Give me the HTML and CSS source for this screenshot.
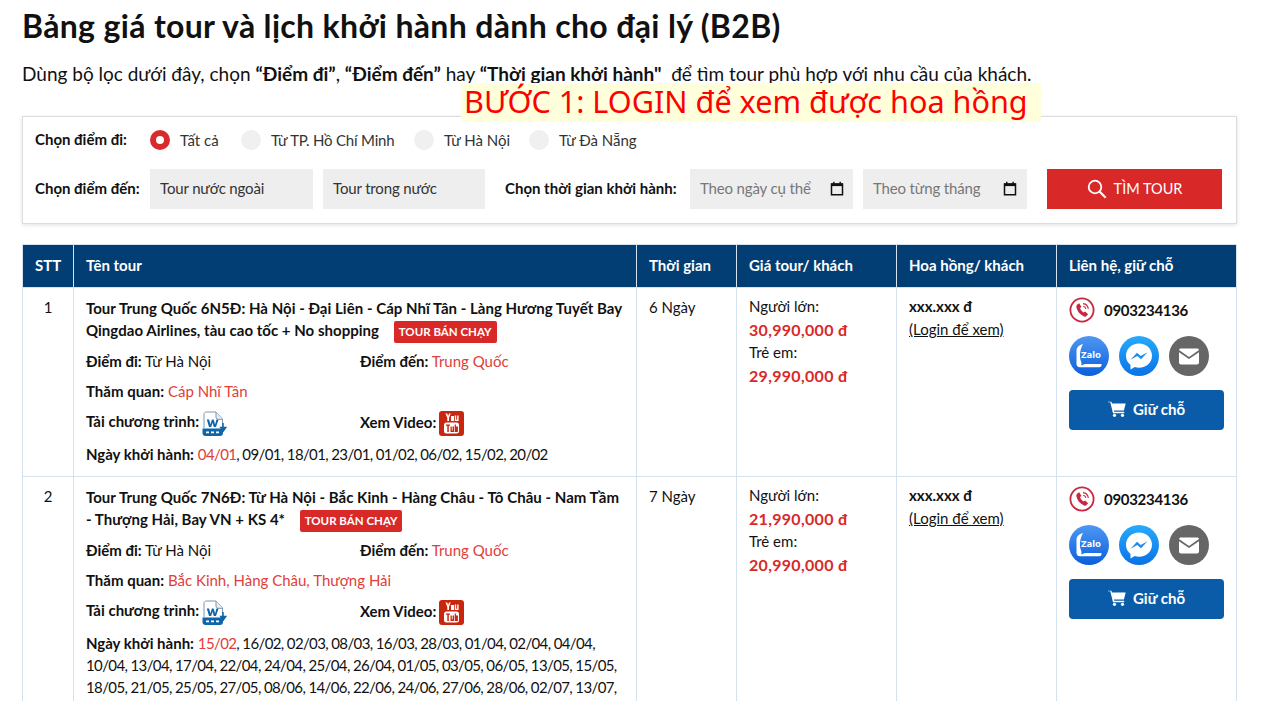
FILE: index.html
```html
<!DOCTYPE html>
<html lang="vi">
<head>
<meta charset="utf-8">
<title>Bảng giá tour</title>
<link rel="stylesheet" href="styles.css">
</head>
<body>
<svg class="defs" width="0" height="0" aria-hidden="true">
  <defs>
    <linearGradient id="gz" x1="0" y1="0" x2="0" y2="1"><stop offset="0" stop-color="#4f97f3"/><stop offset="1" stop-color="#0a5fdc"/></linearGradient>
    <linearGradient id="gm" x1="0" y1="0" x2="0" y2="1"><stop offset="0" stop-color="#27aafc"/><stop offset="1" stop-color="#0a72e6"/></linearGradient>
    <symbol id="i-phone" viewBox="0 0 26 26">
      <circle cx="13" cy="13" r="11.6" fill="#fff" stroke="#c8283f" stroke-width="1.8"/>
      <path d="M8.2 7.4l2-1.2 2.3 3.7-1.5 1.2c.6 1.8 1.8 3.4 3.6 4.5l1.5-1.2 3 2.8-1.6 1.9c-.6.6-1.5.7-2.4.3-4.2-1.7-6.9-5-7.8-9.3-.1-1 .2-2 .9-2.7z" fill="#c8283f"/>
      <path d="M14 6.600c2.800.3 5 2.500 5.300 5.400M14.200 9.200c1.500.2 2.500 1.300 2.700 2.700" fill="none" stroke="#c8283f" stroke-width="1.100"/>
    </symbol>
    <symbol id="i-zalo" viewBox="0 0 40 40">
      <circle cx="20" cy="20" r="20" fill="url(#gz)"/>
      <path d="M14 8c-4 1-6.500 3.500-6.500 7v13c0 2 1.300 3.200 3.500 3.200H30c1.600 0 2.500-.7 2.500-2.200V28H16l-4 1.600c.9-1.400.7-2.400 0-4.300-1.800-4.800-1.200-11.300 2-17.300z" fill="#fff"/>
      <text x="22" y="21.500" class="zalo-text">Zalo</text>
    </symbol>
    <symbol id="i-mess" viewBox="0 0 40 40">
      <circle cx="20" cy="20" r="20" fill="url(#gm)"/>
      <path d="M20 7.500c-7.300 0-13 5.300-13 12.200 0 3.800 1.700 7 4.500 9.200v4.600l4.300-2.400c1.300.4 2.700.6 4.200.6 7.300 0 13-5.300 13-12 0-6.900-5.700-12.200-13-12.200z" fill="#fff"/>
      <path d="M11.500 23.700l6.500-7 3.700 3.300 6.800-3.700-6.500 7-3.700-3.300z" fill="#1a8cf0"/>
    </symbol>
    <symbol id="i-mail" viewBox="0 0 40 40">
      <circle cx="20" cy="20" r="20" fill="#666"/>
      <path d="M12 12.500h16c1.100 0 2 .7 2 1.600L20 21 10 14.100c0-.9.900-1.600 2-1.600z" fill="#fff"/>
      <path d="M10 16.200l10 6.800 10-6.800v10.300c0 1.100-.9 2-2 2H12c-1.100 0-2-.9-2-2z" fill="#fff"/>
    </symbol>
    <symbol id="i-cart" viewBox="0 0 18 16">
      <path d="M0 .8h3.400l.6 1.800h13.700l-1.800 7H5.900l.3 1.200h10v1.500H5l-2.700-11H0z" fill="#fff"/>
      <circle cx="6.500" cy="14.300" r="1.600" fill="#fff"/><circle cx="14.500" cy="14.300" r="1.600" fill="#fff"/>
    </symbol>
    <symbol id="i-cal" viewBox="0 0 14 15">
      <path d="M1.500 3h11v10.700h-11z" fill="#eee" stroke="#111" stroke-width="1.500"/>
      <path d="M1 2.500h12v2.600H1z" fill="#111"/>
      <path d="M3.800 .8v2.400M10.200 .8v2.400" stroke="#111" stroke-width="1.400"/>
    </symbol>
    <symbol id="i-search" viewBox="0 0 20 20">
      <circle cx="8" cy="8" r="6.300" fill="none" stroke="#fff" stroke-width="1.800"/>
      <path d="M12.700 12.700l6 6" stroke="#fff" stroke-width="2.200"/>
    </symbol>
    <symbol id="i-doc" viewBox="0 0 25 26">
      <path d="M2 17V3.500C2 2 3 1 4.500 1h9.500l6.500 7v9" fill="#fff" stroke="#7d97ad" stroke-width="1"/>
      <path d="M14 1v5c0 1.500 1 2.300 2.500 2.300h4" fill="#e6edf3" stroke="#7d97ad" stroke-width="1"/>
      <path d="M4.800 8.500h2.300l1.300 5 1.500-5h1.700l1.500 5 1.300-5h2.200L14 16h-2.200l-1.300-4.300L9.200 16H7z" fill="#0e65a8"/>
      <path d="M.5 17.500h20.500v4.500c0 1.800-1.200 3-3 3H3.500c-1.800 0-3-1.200-3-3z" fill="#0e65a8"/>
      <path d="M4 21.300h3M9 21.300h3M14 21.300h3" stroke="#fff" stroke-width="1.800"/>
      <path d="M21 12v5M18.800 16.500h5l-2.500 3.500z" stroke="#0e65a8" stroke-width="1.500" fill="#0e65a8"/>
    </symbol>
    <symbol id="i-yt" viewBox="0 0 25 25">
      <rect width="25" height="25" rx="3" fill="#c9260f"/>
      <rect x="5" y="11.500" width="15" height="11" rx="2.500" fill="#fff"/>
      <path d="M6.500 2.500h1.700l.9 2.500 1-2.500h1.600L10 7v3H8.300V7zM12 5h3v5h-3zM15.800 4.500h1.400v4.200h1V4.500h1.400V10h-3.800z" fill="#fff"/>
      <path d="M7 13.500h4v1.200H9.800V21H8.300v-6.300H7zM11.500 15.500h1.300v4h.8v-4H15V21h-3.500zM15.700 13.500h1.200V15.500h2v5.500h-3.200z" fill="#c9260f"/>
    </symbol>
  </defs>
</svg>

<main class="page">
  <h1 class="title">Bảng giá tour và lịch khởi hành dành cho đại lý (B2B)</h1>
  <p class="intro">Dùng bộ lọc dưới đây, chọn <b>“Điểm đi”</b>, <b>“Điểm đến”</b> hay <b>“Thời gian khởi hành"</b>&nbsp; để tìm tour phù hợp với nhu cầu của khách.</p>
  <div class="notice">BƯỚC 1: LOGIN để xem được hoa hồng</div>

  <section class="filter">
    <div class="filter-row">
      <span class="flabel">Chọn điểm đi:</span>
      <label class="radio radio-on"><i class="dot"></i>Tất cả</label>
      <label class="radio"><i class="dot"></i><span class="tight">Từ TP. Hồ Chí Minh</span></label>
      <label class="radio"><i class="dot"></i>Từ Hà Nội</label>
      <label class="radio"><i class="dot"></i>Từ Đà Nẵng</label>
    </div>
    <div class="filter-row2">
      <span class="flabel flabel-to">Chọn điểm đến:</span>
      <div class="field f-out">Tour nước ngoài</div>
      <div class="field f-in">Tour trong nước</div>
      <span class="flabel flabel-time">Chọn thời gian khởi hành:</span>
      <div class="field f-date ph">Theo ngày cụ thể<svg class="cal"><use href="#i-cal"/></svg></div>
      <div class="field f-month ph">Theo từng tháng<svg class="cal"><use href="#i-cal"/></svg></div>
      <button class="search" type="button"><svg class="search-i"><use href="#i-search"/></svg>TÌM TOUR</button>
    </div>
  </section>

  <table class="tours">
    <colgroup>
      <col class="c1"><col class="c2"><col class="c3"><col class="c4"><col class="c5"><col class="c6">
    </colgroup>
    <thead>
      <tr><th class="center">STT</th><th>Tên tour</th><th>Thời gian</th><th>Giá tour/ khách</th><th>Hoa hồng/ khách</th><th>Liên hệ, giữ chỗ</th></tr>
    </thead>
    <tbody>
      <tr>
        <td class="center up1">1</td>
        <td>
          <div class="tname">Tour Trung Quốc 6N5Đ: Hà Nội - Đại Liên - Cáp Nhĩ Tân - Làng Hương Tuyết Bay Qingdao Airlines, tàu cao tốc + No shopping <span class="badge">TOUR BÁN CHẠY</span></div>
          <div class="meta"><span><b>Điểm đi:</b> Từ Hà Nội</span><span><b>Điểm đến:</b> <em>Trung Quốc</em></span></div>
          <div class="line"><b>Thăm quan:</b> <em>Cáp Nhĩ Tân</em></div>
          <div class="meta meta-i"><span><b>Tải chương trình:</b> <svg class="doc"><use href="#i-doc"/></svg></span><span><b>Xem Video:</b> <svg class="yt"><use href="#i-yt"/></svg></span></div>
          <div class="dates"><b>Ngày khởi hành:</b> <span class="nums"><em>04/01</em>, 09/01, 18/01, 23/01, 01/02, 06/02, 15/02, 20/02</span></div>
        </td>
        <td class="up1">6 Ngày</td>
        <td class="price">Người lớn:<strong>30,990,000 đ</strong>Trẻ em:<strong>29,990,000 đ</strong></td>
        <td class="comm"><b>xxx.xxx đ</b><a href="#">(Login để xem)</a></td>
        <td class="contact">
          <div class="phone"><svg class="phone-i"><use href="#i-phone"/></svg><b>0903234136</b></div>
          <div class="socials"><svg><use href="#i-zalo"/></svg><svg><use href="#i-mess"/></svg><svg><use href="#i-mail"/></svg></div>
          <button class="hold" type="button"><svg class="cart"><use href="#i-cart"/></svg>Giữ chỗ</button>
        </td>
      </tr>
      <tr class="row-long">
        <td class="center up1">2</td>
        <td>
          <div class="tname">Tour Trung Quốc 7N6Đ: Từ Hà Nội - Bắc Kinh - Hàng Châu - Tô Châu - Nam Tầm - Thượng Hải, Bay VN + KS 4* <span class="badge">TOUR BÁN CHẠY</span></div>
          <div class="meta"><span><b>Điểm đi:</b> Từ Hà Nội</span><span><b>Điểm đến:</b> <em>Trung Quốc</em></span></div>
          <div class="line"><b>Thăm quan:</b> <em>Bắc Kinh, Hàng Châu, Thượng Hải</em></div>
          <div class="meta meta-i"><span><b>Tải chương trình:</b> <svg class="doc"><use href="#i-doc"/></svg></span><span><b>Xem Video:</b> <svg class="yt"><use href="#i-yt"/></svg></span></div>
          <div class="dates"><b>Ngày khởi hành:</b> <span class="nums"><em>15/02</em>, 16/02, 02/03, 08/03, 16/03, 28/03, 01/04, 02/04, 04/04, 10/04, 13/04, 17/04, 22/04, 24/04, 25/04, 26/04, 01/05, 03/05, 06/05, 13/05, 15/05, 18/05, 21/05, 25/05, 27/05, 08/06, 14/06, 22/06, 24/06, 27/06, 28/06, 02/07, 13/07,</span></div>
        </td>
        <td class="up1">7 Ngày</td>
        <td class="price">Người lớn:<strong>21,990,000 đ</strong>Trẻ em:<strong>20,990,000 đ</strong></td>
        <td class="comm"><b>xxx.xxx đ</b><a href="#">(Login để xem)</a></td>
        <td class="contact">
          <div class="phone"><svg class="phone-i"><use href="#i-phone"/></svg><b>0903234136</b></div>
          <div class="socials"><svg><use href="#i-zalo"/></svg><svg><use href="#i-mess"/></svg><svg><use href="#i-mail"/></svg></div>
          <button class="hold" type="button"><svg class="cart"><use href="#i-cart"/></svg>Giữ chỗ</button>
        </td>
      </tr>
    </tbody>
  </table>
</main>
</body>
</html>
```
FILE: styles.css
```css
* { box-sizing: border-box; }
html, body { margin: 0; height: 701px; overflow: hidden; }
body { font-family: Lato, "Noto Sans", sans-serif; font-size: 15px; color: #111; background: #fff; }
.defs { position: absolute; }
.zalo-text { font: 700 9.5px "Noto Sans", sans-serif; fill: #fff; text-anchor: middle; }
.page { position: relative; width: 1215px; margin-left: 22px; }
.title { margin: 0; padding-top: 7px; height: 46px; font-size: 32px; line-height: 37px; letter-spacing: .34px; font-weight: 700; }
.intro { margin: 0; padding-top: 16px; height: 70px; font-size: 19px; line-height: 24px; white-space: nowrap; }
.notice { position: absolute; left: 439px; top: 83px; width: 580px; height: 39px; padding-left: 3px; background: #ffffdc; color: #f00; font: 30.6px/37px "Noto Sans", sans-serif; white-space: nowrap; }
.filter { height: 108px; border: 1px solid #ddd; box-shadow: 0 1px 4px rgba(0,0,0,.12); padding: 12px 12px 0; }
.filter-row { display: grid; grid-template-columns: 115px 91px 173px 115px 108px; align-items: center; height: 22px; white-space: nowrap; }
.filter-row2 { display: flex; align-items: center; height: 40px; margin-top: 18px; }
.flabel { flex: none; font-weight: 700; font-size: 15px; white-space: nowrap; padding-bottom: 2px; }
.flabel-to { width: 115px; }
.flabel-time { width: 185px; margin-left: 20px; }
.radio { display: flex; align-items: center; color: #333; }
.tight { letter-spacing: -.2px; }
.dot { flex: none; width: 20px; height: 20px; margin-right: 10px; border-radius: 50%; background: #f0f0f0; }
.radio-on .dot { background: #fff; border: 6px solid #d92b2b; }
.field { flex: none; display: flex; align-items: center; justify-content: space-between; height: 40px; padding: 0 14px 2px 10px; background: #eee; color: #333; white-space: nowrap; letter-spacing: -.15px; }
.f-out { width: 163px; margin-right: 10px; }
.f-in { width: 162px; }
.f-date { width: 163px; margin-right: 10px; padding-right: 8px; }
.f-month { width: 164px; margin-right: 20px; padding-right: 10px; }
.ph { color: #777; }
.cal { width: 14px; height: 15px; }
.f-date .cal { margin-right: 1px; }
.search { flex: none; display: flex; align-items: center; justify-content: center; width: 175px; height: 40px; padding: 0 0 2px; border: 0; background: #d92828; color: #fff; font: 14.5px Lato, "Noto Sans", sans-serif; }
.search-i { width: 20px; height: 20px; margin: 2px 7px 0 0; }
.tours { width: 1214px; margin-top: 20px; border-collapse: collapse; table-layout: fixed; }
.c1 { width: 51px; } .c2 { width: 563px; } .c3 { width: 100px; } .c4 { width: 160px; } .c5 { width: 160px; } .c6 { width: 180px; }
.tours th, .tours td { border: 1px solid #d5e2ee; padding: 0 12px; text-align: left; vertical-align: top; }
.tours th { height: 43px; padding-bottom: 2px; background: #023e73; color: #fff; font-size: 15px; font-weight: 700; vertical-align: middle; }
.tours .center { text-align: center; }
.tours td { padding-top: 9px; line-height: 23px; height: 189px; }
.tours .row-long td { height: 280px; }
.tours .up1 { padding-top: 8px; }
.tours .price, .tours .comm { padding-top: 7px; }
.tname { font-weight: 700; line-height: 22px; letter-spacing: .03px; }
.badge { display: inline-block; margin-left: 11px; padding: 0 5px; height: 22px; line-height: 21px; border-radius: 2px; background: #d92828; color: #fff; font-size: 11.5px; font-weight: 700; letter-spacing: 0; }
.meta { display: flex; margin-top: 7px; height: 23px; }
.meta span:first-child { width: 274px; }
.meta-i { margin-top: 8px; height: 25px; align-items: center; }
.meta-i svg { vertical-align: middle; }
.line { margin-top: 7px; }
.dates { margin-top: 7px; line-height: 22px; }
.nums { letter-spacing: -.62px; }
em { font-style: normal; color: #e0403a; }
.doc { width: 25px; height: 26px; margin-left: -1px; }
.yt { width: 25px; height: 25px; margin-left: -1px; }
.price strong { display: block; color: #d92828; font-size: 16px; letter-spacing: .3px; }
.comm b, .comm a { display: block; }
.comm a { color: #111; }
.phone { display: flex; align-items: center; height: 26px; gap: 9px; font-size: 15px; letter-spacing: -.3px; }
.phone-i { width: 26px; height: 26px; }
.socials { display: flex; gap: 10px; margin-top: 13px; }
.socials svg { width: 40px; height: 40px; }
.hold { display: flex; align-items: center; justify-content: center; width: 155px; height: 40px; margin-top: 14px; padding: 0 0 2px; border: 0; border-radius: 4px; background: #0b5ca8; color: #fff; font: 700 15px Lato, "Noto Sans", sans-serif; }
.cart { width: 18px; height: 16px; margin-right: 7px; }
```
